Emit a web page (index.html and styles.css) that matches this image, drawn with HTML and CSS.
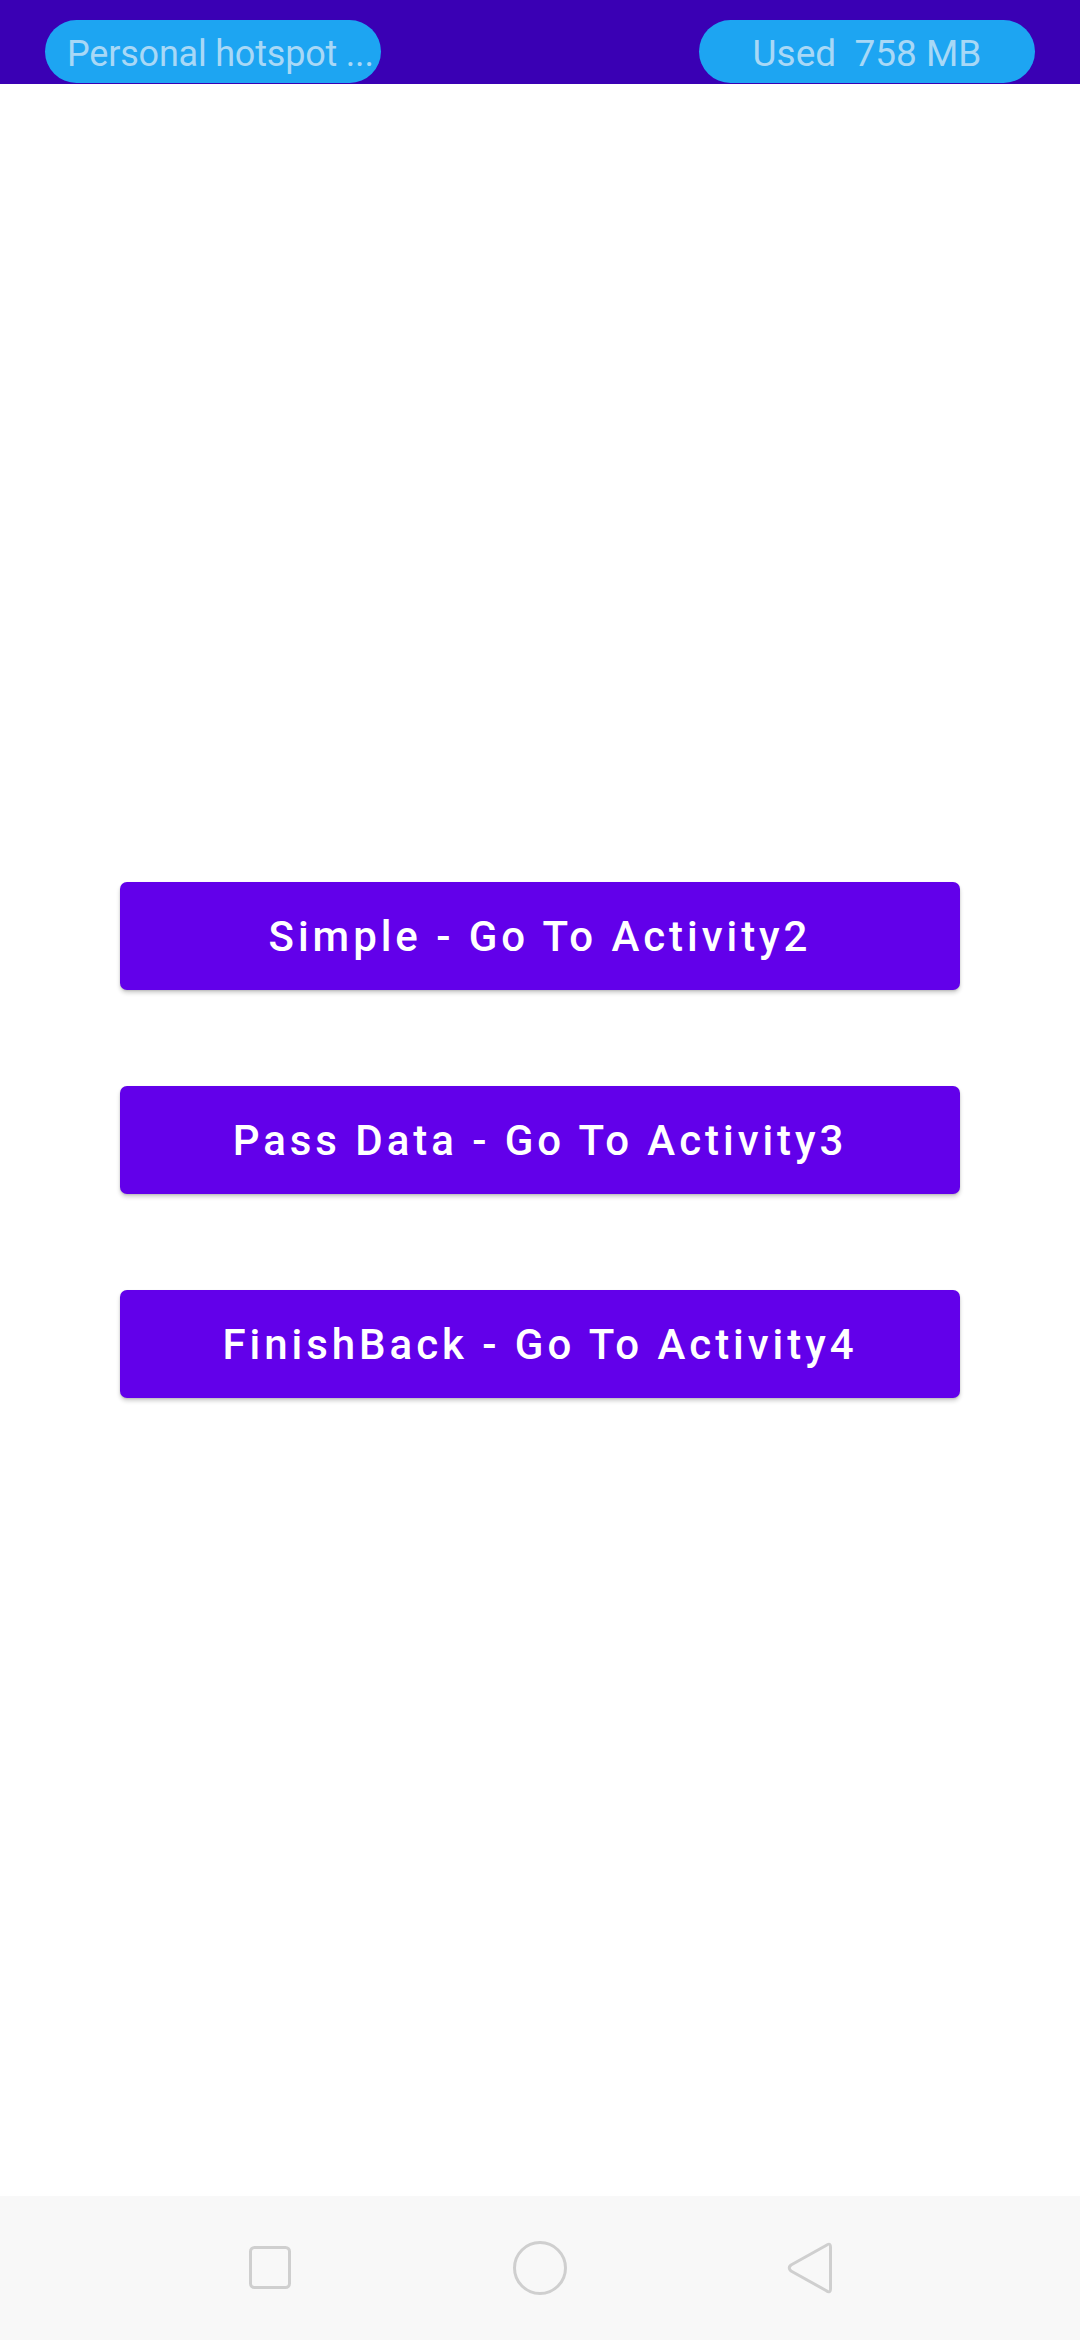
FILE: index.html
```html
<!DOCTYPE html>
<html>
<head>
<meta charset="utf-8">
<link rel="stylesheet" href="styles.css">
</head>
<body>
<div class="screen">
  <div class="statusbar">
    <div class="pill pill-left">Personal hotspot ...</div>
    <div class="pill pill-right">Used&nbsp; 758 MB</div>
  </div>
  <main class="content">
    <button class="btn">Simple - Go To Activity2</button>
    <button class="btn">Pass Data - Go To Activity3</button>
    <button class="btn">FinishBack - Go To Activity4</button>
  </main>
  <nav class="navbar">
    <div class="nav-item">
      <svg width="48" height="48" viewBox="0 0 48 48"><rect x="4.5" y="3.5" width="39" height="40" rx="4" fill="none" stroke="#cfcfcf" stroke-width="3"/></svg>
    </div>
    <div class="nav-item">
      <svg width="60" height="60" viewBox="0 0 60 60"><circle cx="30" cy="30" r="25.5" fill="none" stroke="#cfcfcf" stroke-width="3"/></svg>
    </div>
    <div class="nav-item">
      <svg width="60" height="60" viewBox="0 0 60 60"><path d="M50.5 9.5 Q50.5 4 46 7.5 L11 27 Q7.5 30 11 33 L46 52.5 Q50.5 56 50.5 50.5 Z" fill="none" stroke="#cfcfcf" stroke-width="3" stroke-linejoin="round"/></svg>
    </div>
  </nav>
</div>
</body>
</html>
```
FILE: styles.css
```css
* { box-sizing: border-box; }
html, body { margin: 0; padding: 0; background: #ffffff; }
body { font-family: Roboto, "Noto Sans", sans-serif; }
.screen {
  width: 1080px;
  height: 2340px;
  display: flex;
  flex-direction: column;
  overflow: hidden;
}
.statusbar {
  height: 84px;
  background: #3a00b4;
  display: flex;
  justify-content: space-between;
  align-items: flex-start;
  padding: 20px 45px 0 45px;
}
.pill {
  width: 336px;
  height: 63px;
  border-radius: 32px;
  background: #1da5f2;
  color: #a8d8f6;
  font-size: 37px;
  line-height: 68px;
  white-space: nowrap;
}
.pill-left {
  padding-left: 22px;
  font-size: 36px;
  letter-spacing: -0.2px;
}
.pill-right { text-align: center; }
.content {
  flex: 1;
  display: flex;
  flex-direction: column;
  align-items: center;
  justify-content: center;
  gap: 96px;
}
.btn {
  width: 840px;
  height: 108px;
  border: none;
  border-radius: 7px;
  background: #6200ea;
  color: #ffffff;
  font-family: Roboto, sans-serif;
  font-weight: 500;
  font-size: 42px;
  letter-spacing: 3.95px;
  box-shadow: 0 3px 4px rgba(0,0,0,0.18), 0 1px 2px rgba(0,0,0,0.12);
  padding: 0;
}
.navbar {
  height: 144px;
  background: #f8f8f8;
  display: flex;
  justify-content: center;
  align-items: center;
  gap: 210px;
}
.nav-item {
  width: 60px;
  height: 60px;
  display: flex;
  align-items: center;
  justify-content: center;
}
```
